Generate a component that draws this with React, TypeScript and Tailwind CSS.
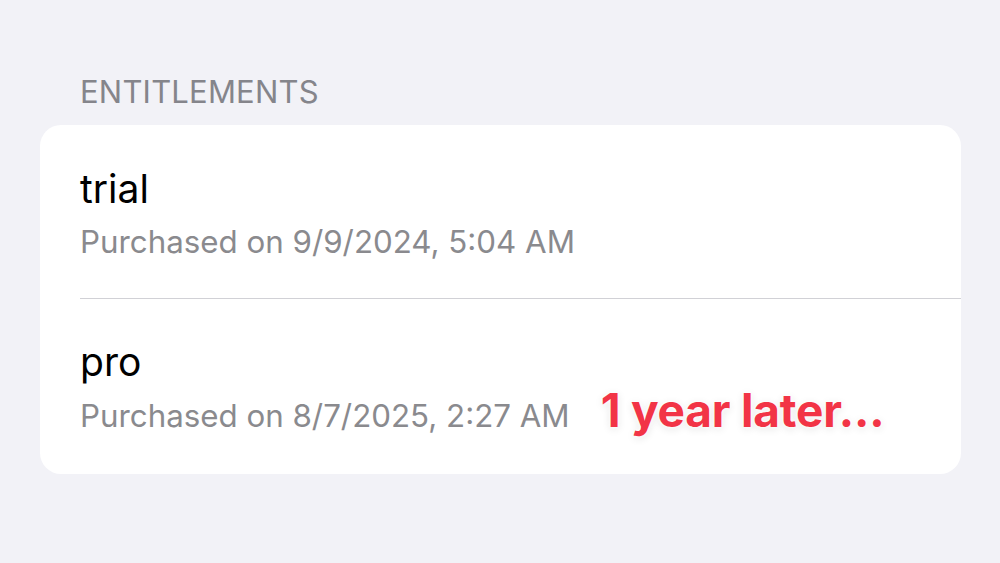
export default function App() {
  return (
    <div
      className="w-[1000px] h-[563px] bg-[#f2f2f7] overflow-hidden"
      style={{ fontFamily: "Inter, 'Noto Sans', sans-serif" }}
    >
      <div className="pt-[74px] px-[40px]">
        <div className="pl-[40px] text-[31px] leading-[36px] text-[#85858b] tracking-[0.2px]">
          ENTITLEMENTS
        </div>
        <div className="mt-[15px] w-[921px] bg-white rounded-[21px] overflow-hidden">
          <div className="h-[173px] pl-[40px] pt-[42px]">
            <div className="text-[39px] leading-[44px] text-black">trial</div>
            <div className="mt-[13px] text-[31.3px] leading-[36px] text-[#8a8a8e]">
              Purchased on 9/9/2024, 5:04 AM
            </div>
          </div>
          <div className="ml-[40px] h-px bg-[#d1d1d6]" />
          <div className="h-[175px] pl-[40px] pt-[41px]">
            <div className="text-[39px] leading-[44px] text-black">pro</div>
            <div className="mt-[14px] h-[36px] flex items-end">
              <span className="text-[31.3px] leading-[36px] text-[#8a8a8e]">
                Purchased on 8/7/2025, 2:27 AM
              </span>
              <span
                className="ml-[31px] mb-[1px] text-[46px] leading-[46px] font-bold text-[#f23446] tracking-[-0.2px]"
                style={{ textShadow: "0 0 5px #fff, 0 0 3px #fff, 0 2px 8px rgba(0,0,0,0.12)" }}
              >
                1 year later...
              </span>
            </div>
          </div>
        </div>
      </div>
    </div>
  );
}
